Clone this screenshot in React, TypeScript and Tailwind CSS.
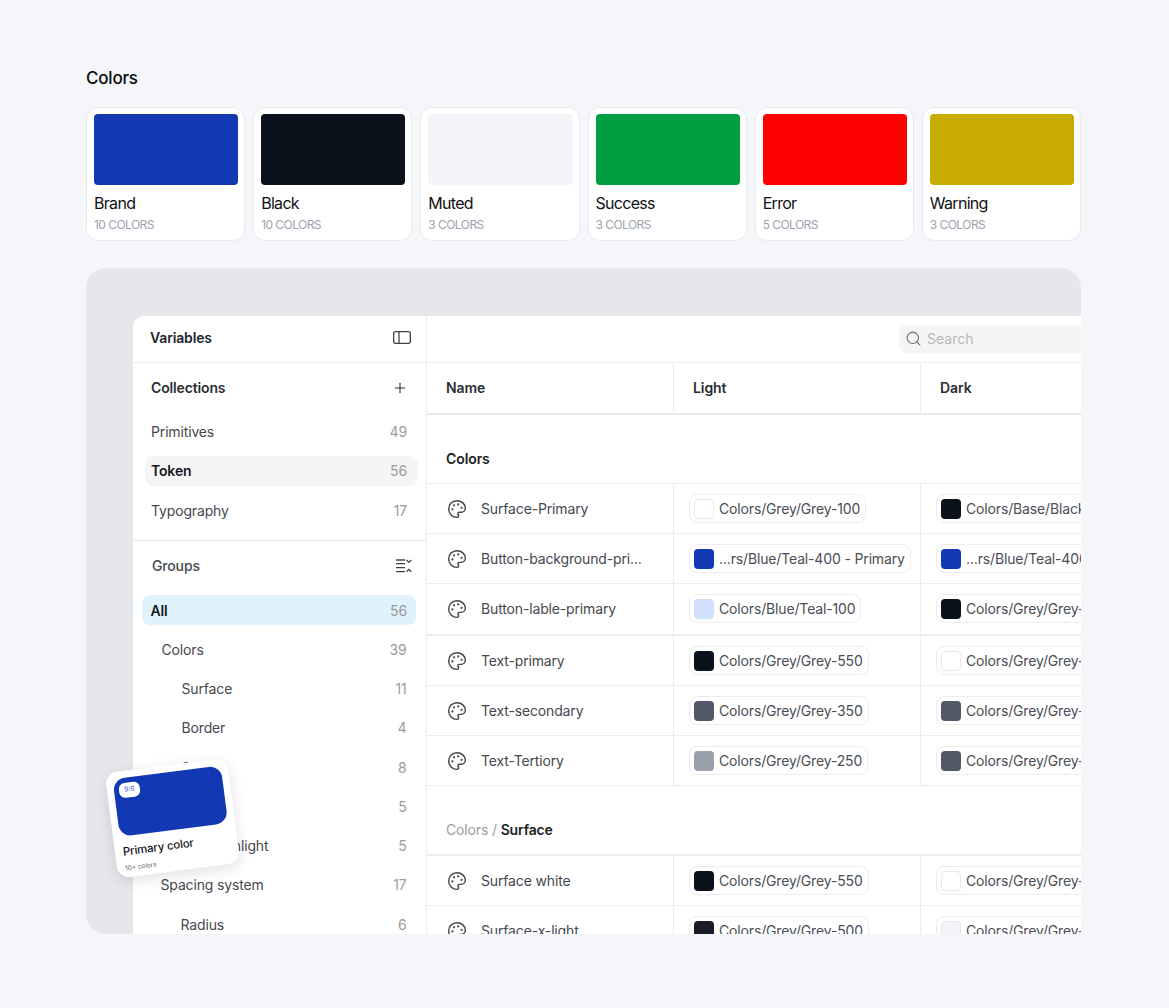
import { Palette, Plus, Search } from 'lucide-react';

const palettes = [
  { name: 'Brand', count: '10 COLORS', swatch: 'bg-[#1238b4]' },
  { name: 'Black', count: '10 COLORS', swatch: 'bg-[#0b121b]' },
  { name: 'Muted', count: '3 COLORS', swatch: 'bg-[#f4f5f8]' },
  { name: 'Success', count: '3 COLORS', swatch: 'bg-[#009e3f]' },
  { name: 'Error', count: '5 COLORS', swatch: 'bg-[#ff0000]' },
  { name: 'Warning', count: '3 COLORS', swatch: 'bg-[#c8ab00]' },
];

const collections = [
  { label: 'Primitives', count: 49 },
  { label: 'Token', count: 56, active: true },
  { label: 'Typography', count: 17 },
];

const groups = [
  { label: 'Colors', count: 39, indent: 'pl-[20px]' },
  { label: 'Surface', count: 11, indent: 'pl-[40px]' },
  { label: 'Border', count: 4, indent: 'pl-[40px]' },
  { label: 'Status', count: 8, indent: 'pl-[40px]' },
  { label: 'Icons', count: 5, indent: 'pl-[40px]' },
  { label: 'Text highlight', count: 5, indent: 'pl-[40px]' },
  { label: 'Spacing system', count: 17, indent: 'pl-[19px]' },
  { label: 'Radius', count: 6, indent: 'pl-[39px]' },
];

const white = 'bg-white border border-[#e8e9ec]';
const ink = 'bg-[#0b121b]';
const blue = 'bg-[#1238b4]';
const slate = 'bg-[#515868]';

const firstRows = [
  { name: 'Surface-Primary', light: 'Colors/Grey/Grey-100', lightSwatch: white, dark: 'Colors/Base/Black', darkSwatch: ink },
  { name: 'Button-background-pri...', light: '...rs/Blue/Teal-400 - Primary', lightSwatch: blue, dark: '...rs/Blue/Teal-400 - Primary', darkSwatch: blue },
  { name: 'Button-lable-primary', light: 'Colors/Blue/Teal-100', lightSwatch: 'bg-[#d2e0fc]', dark: 'Colors/Grey/Grey-550', darkSwatch: ink, thick: true },
  { name: 'Text-primary', light: 'Colors/Grey/Grey-550', lightSwatch: ink, dark: 'Colors/Grey/Grey-100', darkSwatch: white },
  { name: 'Text-secondary', light: 'Colors/Grey/Grey-350', lightSwatch: slate, dark: 'Colors/Grey/Grey-350', darkSwatch: slate },
  { name: 'Text-Tertiory', light: 'Colors/Grey/Grey-250', lightSwatch: 'bg-[#9a9fac]', dark: 'Colors/Grey/Grey-350', darkSwatch: slate },
];

const surfaceRows = [
  { name: 'Surface white', light: 'Colors/Grey/Grey-550', lightSwatch: ink, dark: 'Colors/Grey/Grey-100', darkSwatch: white },
  { name: 'Surface-x-light', light: 'Colors/Grey/Grey-500', lightSwatch: 'bg-[#1a1d29]', dark: 'Colors/Grey/Grey-150', darkSwatch: 'bg-[#f4f5f8] border border-[#e8e9ec]' },
];

function Chip({ label, swatch }: { label: string; swatch: string }) {
  return (
    <div className="flex h-[29px] items-center gap-[5px] whitespace-nowrap rounded-lg border border-[#ececee] bg-white pl-[4px] pr-[5px] text-[14px] tracking-[-0.15px] text-[#4a4d55]">
      <span className={`h-5 w-5 shrink-0 rounded-[4px] ${swatch}`} />
      {label}
    </div>
  );
}

type Row = { name: string; light: string; lightSwatch: string; dark: string; darkSwatch: string; thick?: boolean };

function TableRow({ row }: { row: Row }) {
  return (
    <div className={`grid grid-cols-[246px_247px_1fr] border-[#ececec] ${row.thick ? 'h-[52px] border-b-2 pb-[1px]' : 'h-[50px] border-b'}`}>
      <div className="flex items-center gap-[14px] pl-[20px] text-[14px] tracking-[-0.15px] text-[#45484f]">
        <Palette size={20} strokeWidth={1.7} className="text-[#3f4249]" />
        {row.name}
      </div>
      <div className="flex items-center border-l border-[#ececec] pl-[15px]">
        <Chip label={row.light} swatch={row.lightSwatch} />
      </div>
      <div className="flex items-center border-l border-[#ececec] pl-[15px]">
        <Chip label={row.dark} swatch={row.darkSwatch} />
      </div>
    </div>
  );
}

function SideRow({ label, count, className }: { label: string; count: number; className: string }) {
  return (
    <div className={`flex items-center justify-between text-[14px] tracking-[-0.15px] ${className}`}>
      <span>{label}</span>
      <span className="font-normal text-[#9b9b9b]">{count}</span>
    </div>
  );
}

export default function App() {
  return (
    <div className="h-[1008px] overflow-hidden bg-[#f5f6fa] pl-[86px] pr-[88px] pt-[67px] font-['Inter',sans-serif]">
      <h2 className="text-[17px] font-medium leading-[22px] tracking-[-0.2px] text-[#0a0a0a]">Colors</h2>

      <div className="mt-[18px] grid grid-cols-6 gap-2">
        {palettes.map((p) => (
          <div key={p.name} className="h-[134px] rounded-xl border border-[#e8e9ee] bg-white pl-[7px] pr-[6px] pt-[6px]">
            <div className={`h-[71px] rounded-[4px] ${p.swatch}`} />
            <div className="mt-[8px] text-[16px] leading-[20px] tracking-[-0.7px] text-[#0f1115]">{p.name}</div>
            <div className="mt-[3px] text-[12px] leading-[18px] tracking-[-0.55px] text-[#9ca3af]">{p.count}</div>
          </div>
        ))}
      </div>

      <div className="relative mt-[27px] h-[666px]">
        <div className="h-full overflow-hidden rounded-[20px] rounded-br-none bg-[#e5e7eb] pl-[47px] pt-[48px]">
          <div className="flex w-[1100px] rounded-tl-xl bg-white">
            {/* Sidebar */}
            <aside className="w-[294px] shrink-0 border-r border-[#ececec]">
              <div className="flex h-[47px] items-center justify-between border-b border-[#ececec] pb-[3px] pl-[17px] pr-[15px]">
                <span className="text-[14px] font-semibold tracking-[-0.15px] text-[#1c2530]">Variables</span>
                <svg width="18" height="13" viewBox="0 0 18 13" fill="none" stroke="#3f4249" strokeWidth="1.3">
                  <rect x="0.65" y="0.65" width="16.7" height="11.7" rx="2" />
                  <path d="M6 0.6v11.8" />
                </svg>
              </div>

              <div className="flex h-[49px] items-center justify-between pl-[18px] pr-[18px]">
                <span className="text-[14px] font-semibold tracking-[-0.15px] text-[#2b2d33]">Collections</span>
                <Plus size={16} strokeWidth={1.6} className="text-[#2b2d33]" />
              </div>

              <div className="flex flex-col gap-[10px] pb-[15px] pl-[12px] pr-[8px] pt-[4.5px]">
                {collections.map((c) => (
                  <SideRow
                    key={c.label}
                    label={c.label}
                    count={c.count}
                    className={`h-[29.5px] rounded-lg pl-[6px] pr-[11px] ${c.active ? 'bg-[#f5f5f5] font-semibold text-[#16181d]' : 'text-[#45484f]'}`}
                  />
                ))}
              </div>

              <div className="border-t border-[#e8e8ea]">
                <div className="flex h-[49px] items-center justify-between pl-[19px] pr-[14px]">
                  <span className="text-[14px] font-medium tracking-[-0.15px] text-[#45484f]">Groups</span>
                  <svg width="17" height="14" viewBox="0 0 17 14" fill="none" stroke="#3f4249" strokeWidth="1.3">
                    <path d="M1 1h9M1 4.7h9M1 8.6h9M1 12.6h9" />
                    <path d="M11.5 1l2.4 2.4 2.4-2.4M11.5 12.8l2.4-2.4 2.4 2.4" />
                  </svg>
                </div>

                <div className="flex flex-col pl-[8.5px] pr-[10px] pt-[5px]">
                  <SideRow
                    label="All"
                    count={56}
                    className="h-[30px] rounded-lg bg-[#e0f3fd] pl-[9px] pr-[9px] font-semibold text-[#16181d]"
                  />
                  <div className="mt-[4.5px] flex flex-col pr-[9.5px]">
                    {groups.map((g) => (
                      <SideRow key={g.label} label={g.label} count={g.count} className={`h-[39.3px] text-[#45484f] ${g.indent}`} />
                    ))}
                  </div>
                </div>
              </div>
            </aside>

            {/* Table */}
            <main className="min-w-0 flex-1">
              <div className="flex h-[47px] items-center border-b border-[#ececec] pb-[1px] pl-[472px]">
                <div className="flex h-[28px] w-[300px] items-center gap-[5px] rounded-lg bg-[#f5f5f5] pl-[6px] text-[14px] text-[#b8b8b8]">
                  <Search size={17} strokeWidth={1.5} className="text-[#6b6e75]" />
                  Search
                </div>
              </div>

              <div className="grid h-[52px] grid-cols-[246px_247px_1fr] border-b-2 border-[#e9e9ea] pb-[1px] text-[14px] font-semibold tracking-[-0.1px] text-[#2b2d33]">
                <div className="flex items-center pl-[19px]">Name</div>
                <div className="flex items-center border-l border-[#ececec] pl-[19px]">Light</div>
                <div className="flex items-center border-l border-[#ececec] pl-[19px]">Dark</div>
              </div>

              <div className="flex h-[69px] items-end border-b border-[#ececec] pb-[14px] pl-[19px] text-[14px] font-semibold tracking-[-0.1px] text-[#1c1e22]">
                Colors
              </div>
              {firstRows.map((row) => (
                <TableRow key={row.name} row={row} />
              ))}

              <div className="flex h-[70px] items-end border-b-2 border-[#ececec] pb-[14px] pl-[19px] text-[14px] tracking-[-0.15px] text-[#9b9b9b]">
                Colors /&nbsp;<span className="font-semibold text-[#1c1e22]">Surface</span>
              </div>
              {surfaceRows.map((row) => (
                <TableRow key={row.name} row={row} />
              ))}
            </main>
          </div>
        </div>

        {/* Floating card */}
        <div className="absolute left-[25px] top-[497px] h-[106px] w-[123px] -rotate-[7.4deg] rounded-xl bg-white p-[7px] shadow-[0_4px_14px_rgba(15,20,40,0.12)]">
          <div className="h-[58px] rounded-[12px] bg-[#1238b4] pl-[5px] pt-[5px]">
            <span className="flex h-[15px] w-[21px] items-center justify-center rounded-[6px] bg-white text-[7px] text-[#4a66cc]">9:6</span>
          </div>
          <div className="mt-[7px] whitespace-nowrap pl-[1px] text-[11.5px] font-medium leading-[16px] tracking-[-0.2px] text-[#14161a]">Primary color</div>
          <div className="mt-[5px] pl-[1px] text-[6.5px] leading-[9px] text-[#5c6068]">10+ colors</div>
        </div>
      </div>
    </div>
  );
}
